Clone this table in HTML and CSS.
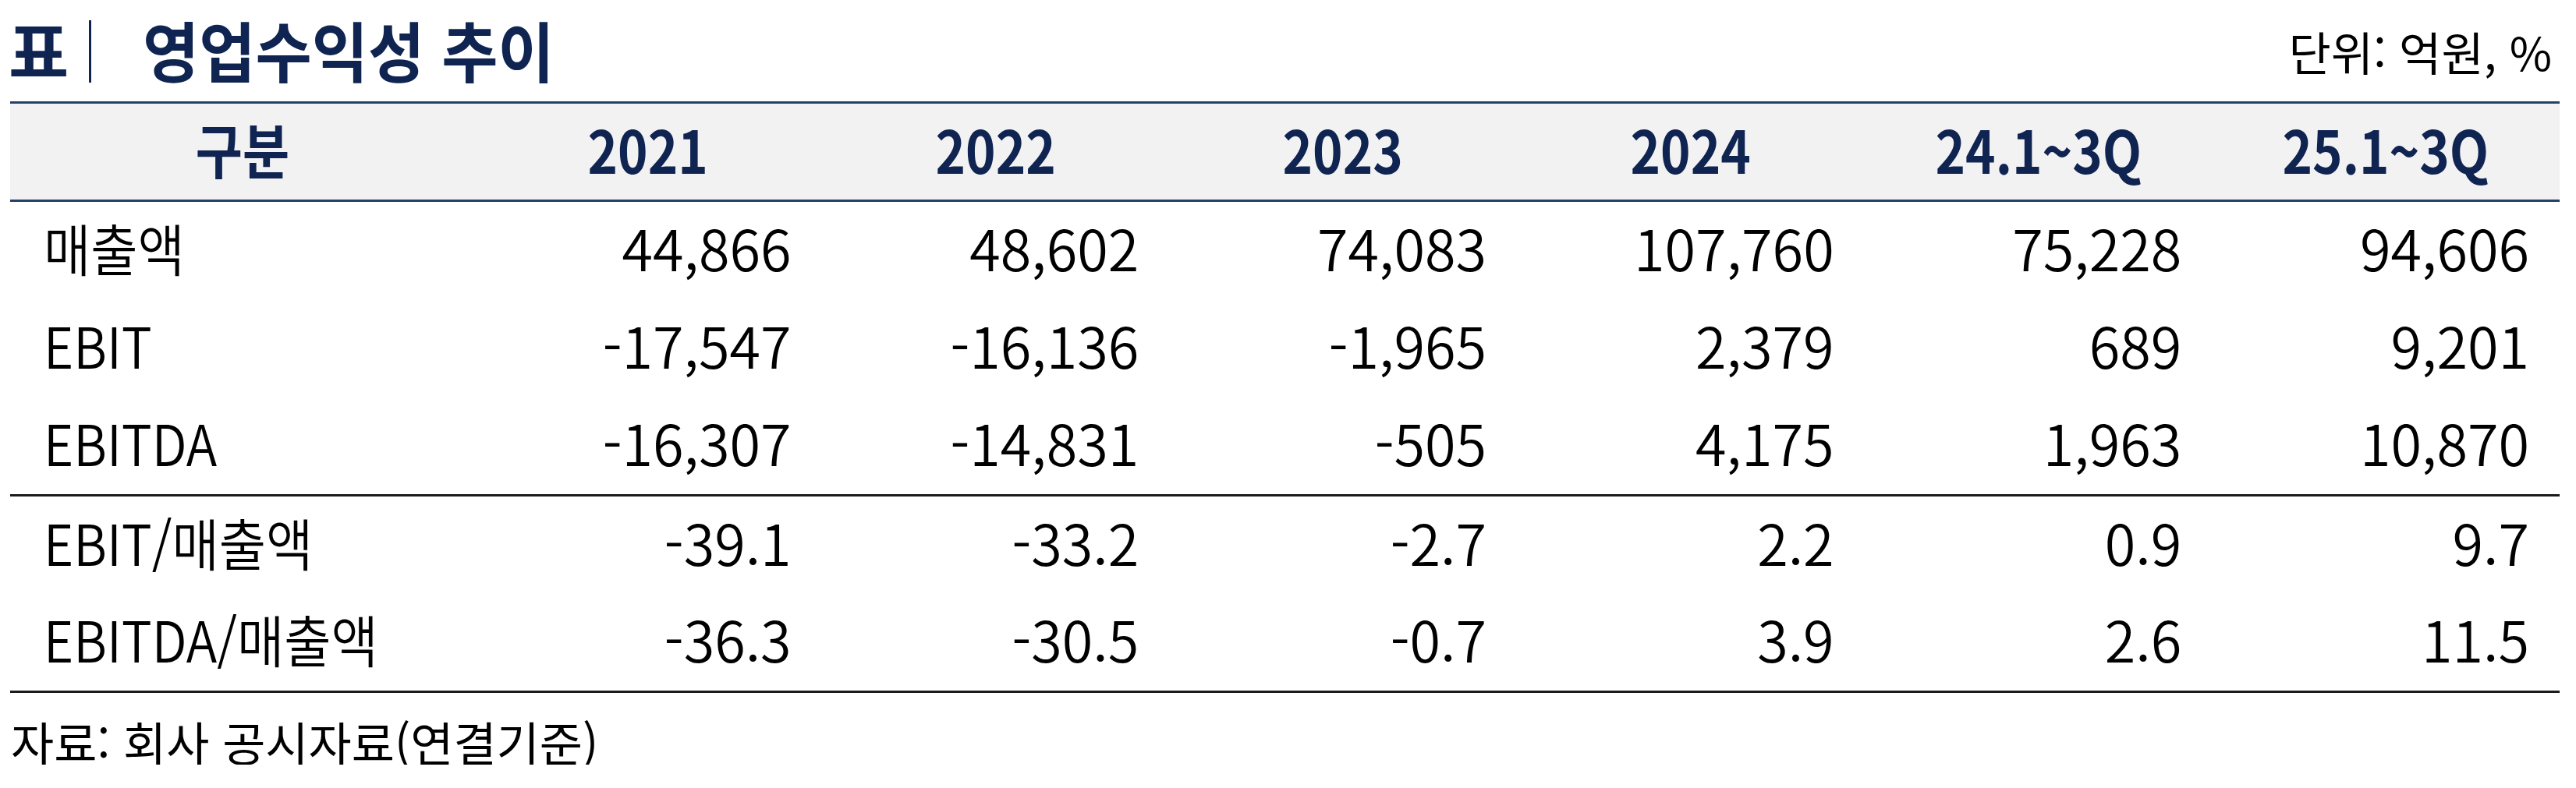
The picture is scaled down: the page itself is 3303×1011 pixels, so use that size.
FILE: index.html
```html
<!DOCTYPE html>
<html lang="ko">
<head>
<meta charset="utf-8">
<title>영업수익성 추이</title>
<link rel="stylesheet" href="styles.css">
</head>
<body>
<div class="page">
  <div class="head">
    <div class="title">
      <span class="pyo">표</span><span class="bar"></span><span class="ttl">영업수익성 추이</span>
    </div>
    <div class="unit">단위: 억원, %</div>
  </div>

  <div class="tbl">
    <div class="row hdr">
      <div class="c"><span class="ht">구분</span></div>
      <div class="c"><span class="ht">2021</span></div>
      <div class="c"><span class="ht">2022</span></div>
      <div class="c"><span class="ht">2023</span></div>
      <div class="c"><span class="ht">2024</span></div>
      <div class="c"><span class="ht">24.1~3Q</span></div>
      <div class="c"><span class="ht">25.1~3Q</span></div>
    </div>
    <div class="row">
      <div class="c lab"><span class="lt">매출액</span></div>
      <div class="c">44,866</div>
      <div class="c">48,602</div>
      <div class="c">74,083</div>
      <div class="c">107,760</div>
      <div class="c">75,228</div>
      <div class="c">94,606</div>
    </div>
    <div class="row">
      <div class="c lab"><span class="lt">EBIT</span></div>
      <div class="c">-17,547</div>
      <div class="c">-16,136</div>
      <div class="c">-1,965</div>
      <div class="c">2,379</div>
      <div class="c">689</div>
      <div class="c">9,201</div>
    </div>
    <div class="row">
      <div class="c lab"><span class="lt">EBITDA</span></div>
      <div class="c">-16,307</div>
      <div class="c">-14,831</div>
      <div class="c">-505</div>
      <div class="c">4,175</div>
      <div class="c">1,963</div>
      <div class="c">10,870</div>
    </div>
    <div class="row sep">
      <div class="c lab"><span class="lt">EBIT/매출액</span></div>
      <div class="c">-39.1</div>
      <div class="c">-33.2</div>
      <div class="c">-2.7</div>
      <div class="c">2.2</div>
      <div class="c">0.9</div>
      <div class="c">9.7</div>
    </div>
    <div class="row last">
      <div class="c lab"><span class="lt">EBITDA/매출액</span></div>
      <div class="c">-36.3</div>
      <div class="c">-30.5</div>
      <div class="c">-0.7</div>
      <div class="c">3.9</div>
      <div class="c">2.6</div>
      <div class="c">11.5</div>
    </div>
  </div>

  <div class="src">자료: 회사 공시자료(연결기준)</div>
</div>
</body>
</html>
```

FILE: styles.css
```css
html, body {
  margin: 0;
  padding: 0;
  background: #ffffff;
}

body {
  font-family: "Noto Sans CJK KR", "Noto Sans", sans-serif;
  color: #000000;
}

.page {
  width: 3303px;
}

.head {
  display: flex;
  justify-content: space-between;
  align-items: center;
  height: 130px;
  box-sizing: border-box;
  padding: 0 31px 5px 11px;
}

.title {
  display: flex;
  align-items: center;
  color: #102452;
  font-weight: 700;
  font-size: 84px;
  line-height: 1;
  white-space: nowrap;
}

.pyo {
  display: inline-block;
}

.bar {
  display: inline-block;
  width: 3px;
  height: 80px;
  background: #102452;
  margin: 7px 0 0 26px;
}

.ttl {
  display: inline-block;
  margin-left: 66px;
  transform: scaleX(0.935);
  transform-origin: left center;
}

.unit {
  font-size: 59px;
  line-height: 1;
  margin-top: 5px;
  white-space: nowrap;
}

.tbl {
  margin-left: 13px;
  width: 3269px;
}

.row {
  display: grid;
  grid-template-columns: 595px repeat(6, 1fr);
  align-items: center;
  height: 125px;
  box-sizing: border-box;
  padding-bottom: 10px;
  font-size: 72px;
  font-weight: 350;
  line-height: 1;
  white-space: nowrap;
}

.row.hdr {
  height: 129px;
  border-top: 3px solid #263e6c;
  border-bottom: 3px solid #263e6c;
  background: #f2f2f2;
  font-size: 76px;
  font-weight: 700;
  color: #102452;
}

.row.sep {
  height: 128px;
  border-top: 3px solid #1b1b1b;
}

.row.last {
  height: 127px;
  border-bottom: 3px solid #1b1b1b;
}

.c {
  text-align: right;
  padding-right: 39px;
}

.c.lab {
  text-align: left;
  padding-left: 43px;
  padding-right: 0;
}

.hdr .c {
  text-align: center;
  padding: 0;
}

.ht {
  display: inline-block;
  transform: scaleX(0.86);
}

.lt {
  display: inline-block;
  transform: scaleX(0.91);
  transform-origin: left center;
}

.src {
  font-size: 60px;
  line-height: 60px;
  margin-top: 32px;
  padding-left: 14px;
  white-space: nowrap;
}
```
